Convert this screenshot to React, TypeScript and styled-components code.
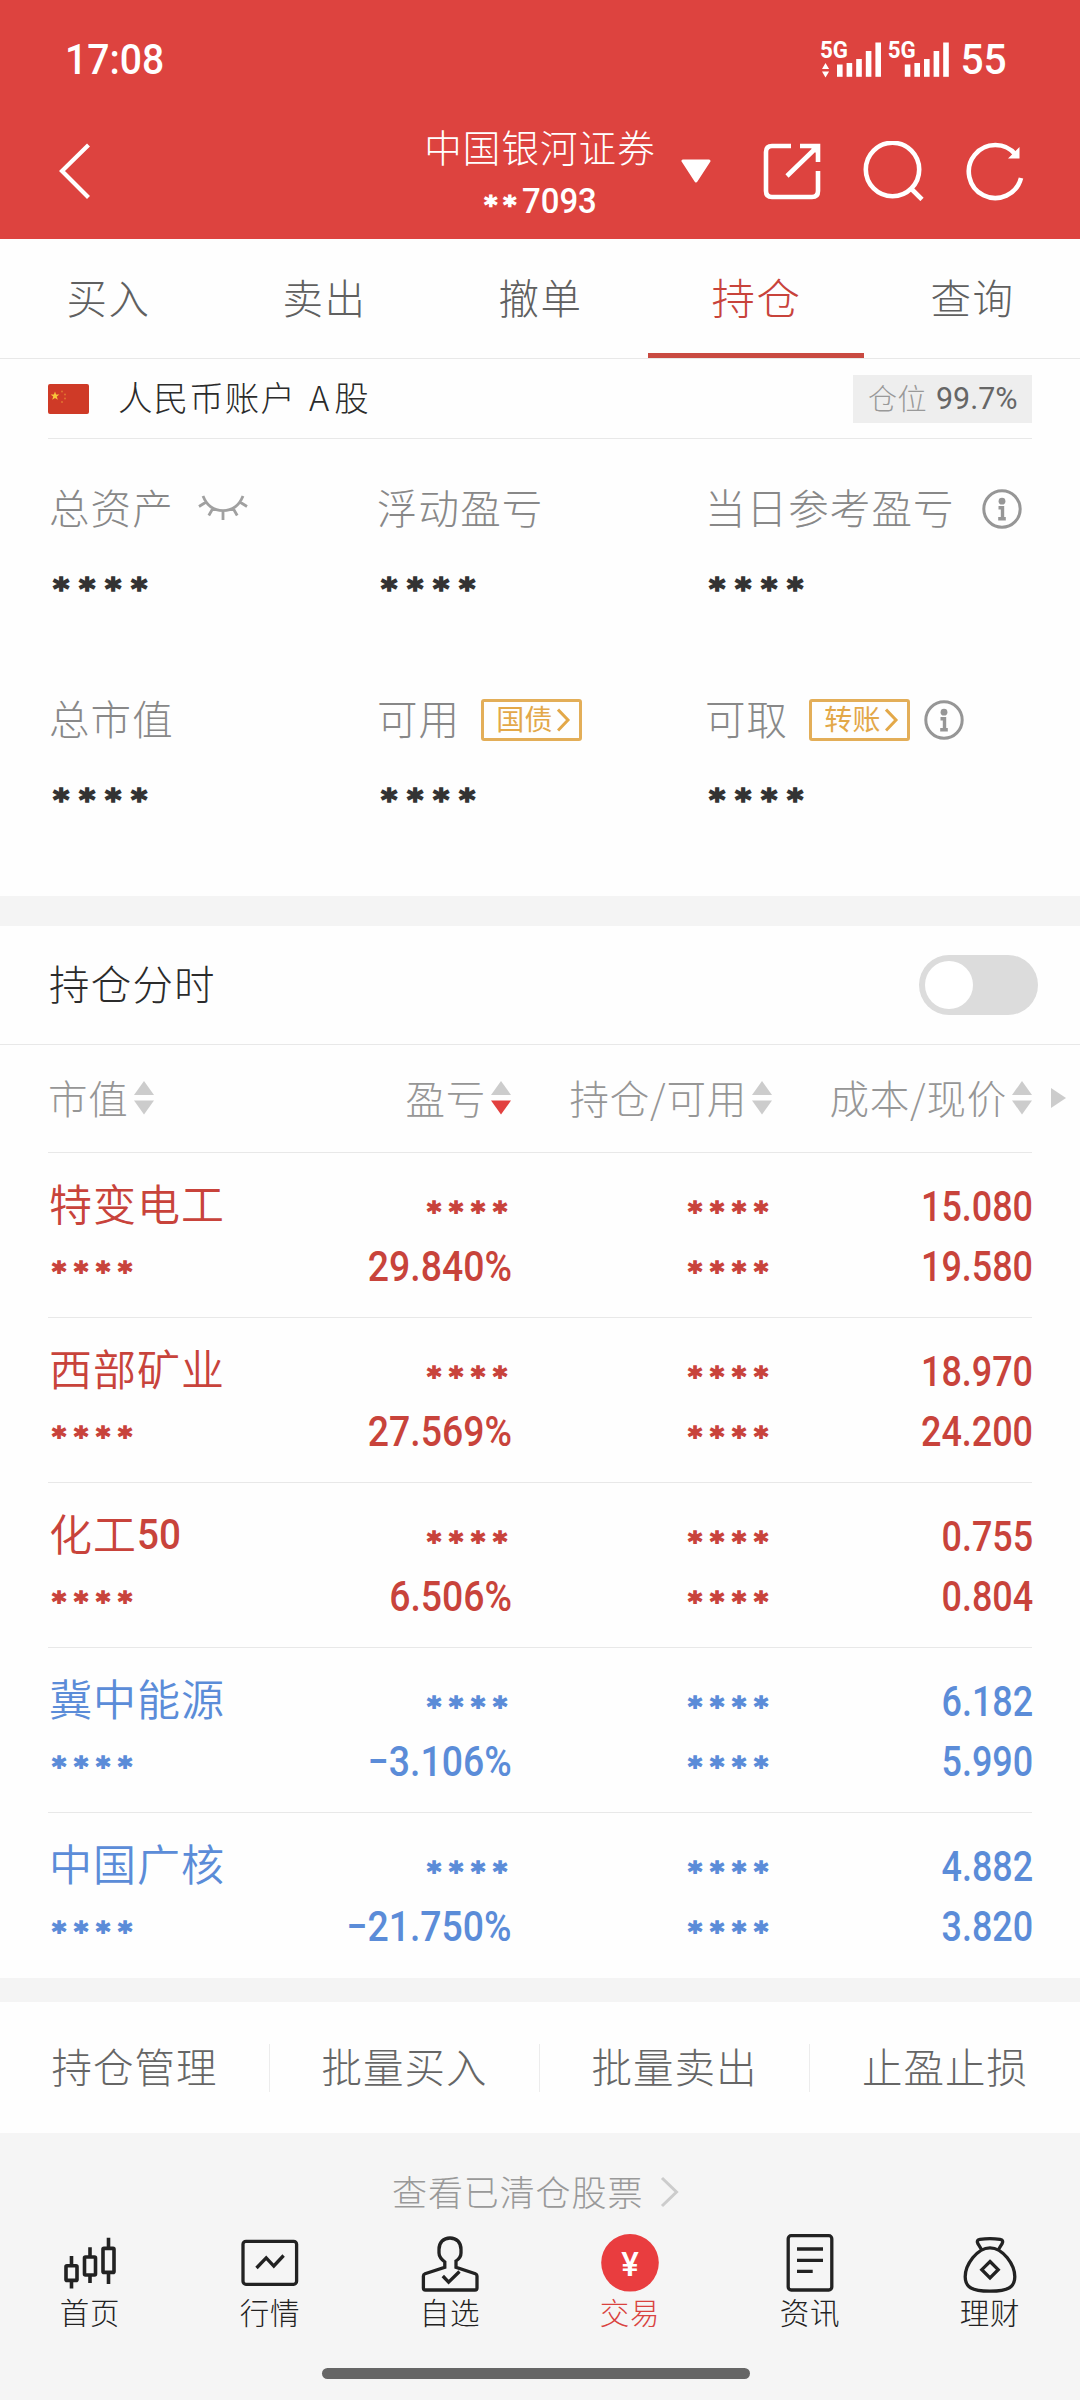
import React from "react";
import styled, { createGlobalStyle } from "styled-components";

const CJK = `"Noto Sans CJK SC", "Noto Sans", sans-serif`;
const NUM = `Roboto, "Noto Sans CJK SC", sans-serif`;
const RED = "#c8433b";
const BLUE = "#5b8cd8";

const GlobalStyle = createGlobalStyle`
  * { box-sizing: border-box; }
  body { margin: 0; background: #f4f4f4; }
`;

const Page = styled.div`
  width: 1080px;
  height: 2400px;
  display: flex;
  flex-direction: column;
  background: #f5f5f5;
  font-family: ${CJK};
  overflow: hidden;
`;

const Label = styled.span<{ $size: number; $color: string; $gap?: number; $weight?: number }>`
  display: block;
  flex: none;
  font-family: ${CJK};
  font-size: ${(p) => p.$size}px;
  font-weight: ${(p) => p.$weight ?? 300};
  line-height: 1.2;
  padding-bottom: 0.08em;
  letter-spacing: ${(p) => p.$gap ?? 1}px;
  color: ${(p) => p.$color};
  white-space: nowrap;
`;

const Digits = styled.span<{ $size: number; $color: string; $stretch?: number; $weight?: number; $origin?: string }>`
  display: block;
  flex: none;
  font-family: ${NUM};
  font-size: ${(p) => p.$size}px;
  font-weight: ${(p) => p.$weight ?? 500};
  line-height: 1;
  color: ${(p) => p.$color};
  white-space: nowrap;
  transform: scaleX(${(p) => p.$stretch ?? 0.88});
  transform-origin: ${(p) => p.$origin ?? "right"} center;
`;

const Stars = styled.span<{ $size: number; $pitch: number; $color: string }>`
  display: flex;
  flex: none;
  height: 1em;
  font-family: "DejaVu Sans", sans-serif;
  font-weight: 700;
  font-size: ${(p) => p.$size}px;
  line-height: 1;
  color: ${(p) => p.$color};
  -webkit-text-stroke: ${(p) => p.$size * 0.05}px ${(p) => p.$color};
  padding-top: 0.15em;
  letter-spacing: ${(p) => p.$pitch - p.$size * 0.523}px;
`;

/* Header */
const Header = styled.header`
  height: 239px;
  flex: none;
  background: #dd433f;
  display: flex;
  flex-direction: column;
`;

const StatusBar = styled.div`
  height: 118px;
  padding: 2px 73px 0 65px;
  display: flex;
  align-items: center;
`;

const Signals = styled.svg`
  margin-left: auto;
  margin-right: 9px;
`;

const NavBar = styled.div`
  height: 106px;
  display: grid;
  grid-template-columns: 1fr auto 1fr;
  align-items: center;
`;

const NavLeft = styled.div`
  padding-left: 56px;
  display: flex;
`;

const NavTitle = styled.div`
  display: flex;
  flex-direction: column;
  align-items: center;
  height: 106px;
  padding-top: 5px;
`;

const AccountNo = styled.div`
  display: flex;
  align-items: center;
  height: 36px;
  margin-top: 12px;
  padding-left: 6px;
`;

const NavRight = styled.div`
  display: flex;
  align-items: center;
  height: 106px;
`;

/* Tabs */
const Tabs = styled.nav`
  height: 120px;
  flex: none;
  display: grid;
  grid-template-columns: repeat(5, 1fr);
  background: #fefefe;
  border-bottom: 1px solid #e8e8e8;
`;

const Tab = styled.div<{ $active: boolean }>`
  display: flex;
  align-items: center;
  justify-content: center;
  border-bottom: 5px solid ${(p) => (p.$active ? "#c94a41" : "transparent")};
  padding: 5px 0 0 1px;
`;

/* Account */
const Panel = styled.section`
  flex: none;
  background: #fefefe;
`;

const AccountRow = styled.div`
  height: 80px;
  margin: 0 48px;
  display: flex;
  align-items: center;
  border-bottom: 1px solid #e8e8e8;
`;

const AccountName = styled.div`
  display: flex;
  align-items: center;
  gap: 13px;
`;

const FlagIcon = styled.svg`
  margin-right: 29px;
`;

const PositionTag = styled.div`
  margin-left: auto;
  width: 179px;
  height: 48px;
  background: #eeeeee;
  display: flex;
  align-items: center;
  padding-left: 15px;
`;

const Summary = styled.div`
  height: 457px;
  padding: 0 0 0 49px;
  display: grid;
  grid-template-columns: 328px 328px 1fr;
  grid-template-rows: 211px 211px;
`;

const Metric = styled.div`
  display: flex;
  flex-direction: column;
  padding-top: 40px;
`;

const MetricHead = styled.div`
  display: flex;
  align-items: center;
  height: 60px;
`;

const MetricValue = styled.div`
  height: 30px;
  margin-top: 30px;
  padding-left: 4px;
  display: flex;
  align-items: center;
`;

const LinkTag = styled.div`
  width: 101px;
  height: 42px;
  border: 3px solid #e3ae58;
  border-radius: 3px;
  margin-left: 21px;
  padding-left: 12px;
  display: flex;
  align-items: center;
  gap: 4px;
`;

const Spacer = styled.div<{ $w: number }>`
  width: ${(p) => p.$w}px;
  flex: none;
`;

const Band = styled.div<{ $h: number }>`
  height: ${(p) => p.$h}px;
  flex: none;
  background: #f4f4f4;
`;

/* Intraday toggle */
const ToggleRow = styled.div`
  height: 119px;
  padding: 0 42px 0 49px;
  display: flex;
  align-items: center;
  justify-content: space-between;
  border-bottom: 1px solid #e8e8e8;
`;

const Switch = styled.div`
  width: 119px;
  height: 60px;
  border-radius: 30px;
  background: #dcdcdc;
  padding: 6px;
`;

const Knob = styled.div`
  width: 48px;
  height: 48px;
  border-radius: 50%;
  background: #fff;
`;

/* Holdings */
const Table = styled.div`
  margin: 0 48px;
`;

const columns = `
  display: grid;
  grid-template-columns: 214px 249px 261px 260px;
`;

const TableHead = styled.div`
  ${columns}
  height: 108px;
  align-items: center;
  padding-bottom: 1px;
  border-bottom: 1px solid #e8e8e8;
`;

const HeadCell = styled.div<{ $left?: boolean }>`
  display: flex;
  align-items: center;
  justify-content: ${(p) => (p.$left ? "flex-start" : "flex-end")};
  gap: 5px;
`;

const MoreArrow = styled.svg`
  margin: 0 -34px 0 14px;
`;

const Row = styled.div`
  ${columns}
  height: 165px;
  border-bottom: 1px solid #e8e8e8;
  &:last-child { border-bottom: none; }
`;

const Cell = styled.div<{ $left?: boolean }>`
  display: flex;
  flex-direction: column;
  padding-top: 24px;
  align-items: ${(p) => (p.$left ? "flex-start" : "flex-end")};
`;

const Line = styled.div`
  height: 60px;
  display: flex;
  align-items: center;
  margin-right: -1px;
`;

const NameLine = styled(Line)`
  height: 55px;
  margin-bottom: 5px;
  padding-left: 1px;
`;

const MaskLine = styled(Line)<{ $left?: boolean }>`
  padding-left: ${(p) => (p.$left ? 4 : 0)}px;
  margin-right: -4px;
`;

/* Actions */
const Actions = styled.div`
  height: 131px;
  flex: none;
  display: grid;
  grid-template-columns: repeat(4, 1fr);
  align-items: center;
  background: #fefefe;
`;

const Action = styled.div`
  height: 48px;
  display: flex;
  align-items: center;
  justify-content: center;
  border-right: 1px solid #ececec;
  &:last-child { border-right: none; }
`;

const ClearedLink = styled.div`
  height: 99px;
  flex: none;
  padding: 19px 0 0 392px;
  display: flex;
  align-items: center;
  gap: 17px;
`;

const TabBar = styled.nav`
  height: 136px;
  flex: none;
  display: grid;
  grid-template-columns: repeat(6, 1fr);
`;

const TabItem = styled.div`
  display: flex;
  flex-direction: column;
  align-items: center;
`;

const TabIcon = styled.svg`
  margin-bottom: -2px;
`;

const HomeIndicator = styled.div`
  width: 428px;
  height: 11px;
  margin-left: 322px;
  border-radius: 6px;
  background: #666;
`;

const InfoIcon = () => (
  <svg width="40" height="40" viewBox="0 0 40 40" fill="none" stroke="#969696">
    <circle cx="20" cy="20" r="18.2" strokeWidth="3" />
    <circle cx="20" cy="12.2" r="3.4" fill="#969696" stroke="none" />
    <path d="M16.500 18.800h4v10.600M16.200 29.800h7.600" strokeWidth="3.400" />
  </svg>
);

const EyeClosed = () => (
  <svg width="50" height="30" viewBox="0 0 50 30" fill="none" stroke="#a0a0a0" strokeWidth="2.800">
    <path d="M5 2C9 12 16 16.600 25 16.600S41 12 45 2M1 12.500l8-5M49 12.500l-8-5M10.800 21.500l4-7M39.200 21.500l-4-7M25 17v9" />
  </svg>
);

const SortIcon = ({ down }: { down?: boolean }) => (
  <svg width="20" height="34" viewBox="0 0 20 34">
    <path d="M10 0L20 14H0z" fill="#ccc" />
    <path d="M10 33.500L20 19.500H0z" fill={down ? "#e2403f" : "#ccc"} />
  </svg>
);

const Signal = ({ x }: { x: number }) => (
  <g fill="#fff">
    <text x={x} y="24" fontFamily="Roboto" fontWeight="700" fontSize="23" textLength="28" lengthAdjust="spacingAndGlyphs">5G</text>
    {[30.5, 29, 25, 17, 8.5].map((top, i) => (
      <rect key={i} x={x + 17 + i * 9.6} y={top} width="5.600" height={42.8 - top} />
    ))}
  </g>
);

const navIcons: Record<string, React.ReactNode> = {
  首页: (
    <g strokeWidth="3.600">
      <rect x="8" y="33.800" width="11" height="14.600" rx="1" />
      <rect x="26.500" y="25" width="11" height="18" rx="1" />
      <rect x="45" y="16.400" width="11" height="24" rx="1" />
      <path d="M13.500 24v9M13.500 49v7.500M32 15.300V25M32 43v8M50.500 5.700V16M50.500 41v11" />
    </g>
  ),
  行情: (
    <g>
      <rect x="5" y="9.300" width="53.600" height="43" rx="3" />
      <path d="M18.500 36l9.700-10.200 7.600 8.200 9.800-10.500" />
    </g>
  ),
  自选: (
    <g>
      <path d="M26.800 29v6.200L7 41.700q-1.600.6-1.600 2.300V56q0 2 2 2H57q2 0 2-2V44q0-1.700-1.600-2.300L38 35.200V29c3.600-2.400 5-4.500 5-8v-3.500C43 10.200 38.500 6 32 6s-11 4.200-11 11.500V21c0 3.500 1.700 6 6.500 9.500" />
      <path d="M24.800 44l5.800 6.200L41.500 39.500" />
    </g>
  ),
  交易: (
    <g stroke="none">
      <circle cx="32" cy="30.800" r="28.800" fill="#e93d3f" />
      <text x="32" y="43.500" textAnchor="middle" fontFamily="Roboto" fontWeight="500" fontSize="33" fill="#fff">¥</text>
    </g>
  ),
  资讯: (
    <g>
      <rect x="10.200" y="3.700" width="43.600" height="54.300" rx="3" />
      <path d="M19 17h26M19 28.300h26M19 39.300h15.700" />
    </g>
  ),
  理财: (
    <g>
      <path d="M32 15.800c-13 0-24.800 17-24.800 29 0 10 6 14.400 24.800 14.400s24.800-4.400 24.800-14.400c0-12-11.800-29-24.800-29z" />
      <path d="M23.500 17.500l-3.600-5.800c-1.400-2.600-.4-4.100 2-4.400 6.600-.8 13.600-.8 20.200 0 2.400.3 3.400 1.800 2 4.400l-3.600 5.800" />
      <path d="M32 29.500l8.200 8.200-8.200 8.200-8.200-8.200z" />
    </g>
  ),
};

type Holding = { name: string; suffix?: string; pct: string; cost: string; price: string; up: boolean };

const holdings: Holding[] = [
  { name: "特变电工", pct: "29.840%", cost: "15.080", price: "19.580", up: true },
  { name: "西部矿业", pct: "27.569%", cost: "18.970", price: "24.200", up: true },
  { name: "化工", suffix: "50", pct: "6.506%", cost: "0.755", price: "0.804", up: true },
  { name: "冀中能源", pct: "−3.106%", cost: "6.182", price: "5.990", up: false },
  { name: "中国广核", pct: "−21.750%", cost: "4.882", price: "3.820", up: false },
];

const MetricBlock = ({ title, children }: { title: string; children?: React.ReactNode }) => (
  <Metric>
    <MetricHead>
      <Label $size={40.5} $color="#888" $gap={1.1}>{title}</Label>
      {children}
    </MetricHead>
    <MetricValue>
      <Stars $size={31} $pitch={26} $color="#333">****</Stars>
    </MetricValue>
  </Metric>
);

const Tag = ({ text }: { text: string }) => (
  <LinkTag>
    <Label $size={28} $color="#e3a848" $gap={0.3} $weight={400}>{text}</Label>
    <svg width="15" height="24" viewBox="0 0 15 24" fill="none" stroke="#e3a848" strokeWidth="3">
      <path d="M1 1.500L11 12 1 22.500" />
    </svg>
  </LinkTag>
);

const Masked = ({ color }: { color: string }) => (
  <Stars $size={27} $pitch={22} $color={color}>****</Stars>
);

export default function App() {
  return (
    <Page>
      <GlobalStyle />
      <Header>
        <StatusBar>
          <Digits $size={42} $color="#fff" $stretch={0.93} $origin="left">17:08</Digits>
          <Signals width="132" height="52" viewBox="0 0 132 52">
            <Signal x={2} />
            <Signal x={69.8} />
            <path d="M7.500 29l3.600 6H4zM7.500 43.500l3.600-6H4z" fill="#fff" />
          </Signals>
          <Digits $size={42} $color="#fff" $stretch={0.97}>55</Digits>
        </StatusBar>
        <NavBar>
          <NavLeft>
            <svg width="40" height="60" viewBox="0 0 40 60" fill="none" stroke="#fff" strokeWidth="4.200">
              <path d="M32.500 4L6 30l26.500 26.500" />
            </svg>
          </NavLeft>
          <NavTitle>
            <Label $size={37.5} $color="#fff" $gap={1.1}>中国银河证券</Label>
            <AccountNo>
              <Stars $size={25} $pitch={19} $color="#fff">**</Stars>
              <Digits $size={35} $color="#fff" $stretch={0.94} $origin="left">7093</Digits>
            </AccountNo>
          </NavTitle>
          <NavRight>
            <Spacer $w={25} />
            <svg width="30" height="25" viewBox="0 0 30 25">
              <path d="M2 2h26L15 22z" fill="#fff" stroke="#fff" strokeWidth="3" strokeLinejoin="round" />
            </svg>
            <Spacer $w={50} />
            <svg width="60" height="60" viewBox="0 0 60 60" fill="none" stroke="#fff" strokeWidth="4.600">
              <path d="M30 5H11Q5 5 5 11v39q0 6 6 6h40q6 0 6-6V30M39 5h18v16M57 5L26 35" />
              <path d="M48 5h9v9z" fill="#fff" stroke="none" />
            </svg>
            <Spacer $w={41} />
            <svg width="62" height="60" viewBox="0 0 62 60" fill="none" stroke="#fff" strokeWidth="4.600">
              <circle cx="30.500" cy="28.500" r="26.700" />
              <path d="M49 47.500L60 58.500" />
            </svg>
            <Spacer $w={42} />
            <svg width="60" height="62" viewBox="0 0 60 62" fill="none" stroke="#fff" strokeWidth="4.600">
              <path d="M55 38A26.500 26.500 0 1 1 50 15" />
              <path d="M42 18.500h11.500V7z" fill="#fff" stroke="none" />
            </svg>
          </NavRight>
        </NavBar>
      </Header>

      <Tabs>
        {["买入", "卖出", "撤单", "持仓", "查询"].map((t) => (
          <Tab key={t} $active={t === "持仓"}>
            <Label $size={t === "持仓" ? 43.5 : 40.5} $color={t === "持仓" ? RED : "#606060"} $gap={1.5}>{t}</Label>
          </Tab>
        ))}
      </Tabs>

      <Panel>
        <AccountRow>
          <FlagIcon width="41" height="30" viewBox="0 0 41 30">
            <rect width="41" height="30" rx="2" fill="#cf3a27" />
            <path d="M7 7.500l1.100 3.100h3.300l-2.600 2 1 3.200L7 13.900l-2.800 1.900 1-3.200-2.600-2h3.300z" fill="#f8c53a" />
            <g fill="#e88b34" opacity="0.7">
              <circle cx="14" cy="7.500" r="1" />
              <circle cx="17" cy="10.500" r="1" />
              <circle cx="17" cy="14.500" r="1" />
              <circle cx="14" cy="18" r="1" />
            </g>
          </FlagIcon>
          <AccountName>
            <Label $size={34.5} $color="#2b2b2b" $gap={1.1}>人民币账户</Label>
            <Label $size={34.5} $color="#2b2b2b" $gap={5}>A股</Label>
          </AccountName>
          <PositionTag>
            <Label $size={29} $color="#999" $gap={0.6}>仓位</Label>
            <Spacer $w={9} />
            <Digits $size={31} $color="#666" $weight={400} $stretch={0.98} $origin="left">99.7%</Digits>
          </PositionTag>
        </AccountRow>
        <Summary>
          <MetricBlock title="总资产">
            <Spacer $w={24} />
            <EyeClosed />
          </MetricBlock>
          <MetricBlock title="浮动盈亏" />
          <MetricBlock title="当日参考盈亏">
            <Spacer $w={27} />
            <InfoIcon />
          </MetricBlock>
          <MetricBlock title="总市值" />
          <MetricBlock title="可用">
            <Tag text="国债" />
          </MetricBlock>
          <MetricBlock title="可取">
            <Tag text="转账" />
            <Spacer $w={14} />
            <InfoIcon />
          </MetricBlock>
        </Summary>
      </Panel>

      <Band $h={30} />

      <Panel>
        <ToggleRow>
          <Label $size={40.5} $color="#2b2b2b" $gap={1.2}>持仓分时</Label>
          <Switch>
            <Knob />
          </Switch>
        </ToggleRow>
        <Table>
          <TableHead>
            <HeadCell $left>
              <Label $size={39.5} $color="#969696" $gap={0.8}>市值</Label>
              <SortIcon />
            </HeadCell>
            <HeadCell>
              <Label $size={39.5} $color="#969696" $gap={0.8}>盈亏</Label>
              <SortIcon down />
            </HeadCell>
            <HeadCell>
              <Label $size={39.5} $color="#969696" $gap={0.8}>持仓/可用</Label>
              <SortIcon />
            </HeadCell>
            <HeadCell>
              <Label $size={39.5} $color="#969696" $gap={0.8}>成本/现价</Label>
              <SortIcon />
              <MoreArrow width="15" height="20" viewBox="0 0 15 20">
                <path d="M0 0l15 10L0 20z" fill="#ccc" />
              </MoreArrow>
            </HeadCell>
          </TableHead>
          {holdings.map((h) => {
            const color = h.up ? RED : BLUE;
            return (
              <Row key={h.name}>
                <Cell $left>
                  <NameLine>
                    <Label $size={43} $color={color} $gap={1} $weight={350}>{h.name}</Label>
                    {h.suffix && <Digits $size={42} $color={color} $stretch={0.92} $origin="left">{h.suffix}</Digits>}
                  </NameLine>
                  <MaskLine $left><Masked color={color} /></MaskLine>
                </Cell>
                <Cell>
                  <MaskLine><Masked color={color} /></MaskLine>
                  <Line><Digits $size={42} $color={color} $stretch={0.89}>{h.pct}</Digits></Line>
                </Cell>
                <Cell>
                  <MaskLine><Masked color={color} /></MaskLine>
                  <MaskLine><Masked color={color} /></MaskLine>
                </Cell>
                <Cell>
                  <Line><Digits $size={42} $color={color} $stretch={0.855}>{h.cost}</Digits></Line>
                  <Line><Digits $size={42} $color={color} $stretch={0.855}>{h.price}</Digits></Line>
                </Cell>
              </Row>
            );
          })}
        </Table>
      </Panel>

      <Band $h={24} />

      <Actions>
        {["持仓管理", "批量买入", "批量卖出", "止盈止损"].map((t) => (
          <Action key={t}>
            <Label $size={40.5} $color="#666">{t}</Label>
          </Action>
        ))}
      </Actions>

      <ClearedLink>
        <Label $size={35} $color="#999" $gap={0.9}>查看已清仓股票</Label>
        <svg width="20" height="32" viewBox="0 0 20 32" fill="none" stroke="#ccc" strokeWidth="3">
          <path d="M2 2l14.500 14L2 30" />
        </svg>
      </ClearedLink>

      <TabBar>
        {Object.keys(navIcons).map((name) => (
          <TabItem key={name}>
            <TabIcon width="64" height="64" viewBox="0 0 64 64" fill="none" stroke="#222" strokeWidth="3.300">
              {navIcons[name]}
            </TabIcon>
            <Label $size={29.5} $color={name === "交易" ? "#d9433f" : "#222"} $gap={0.8}>{name}</Label>
          </TabItem>
        ))}
      </TabBar>
      <HomeIndicator />
    </Page>
  );
}
